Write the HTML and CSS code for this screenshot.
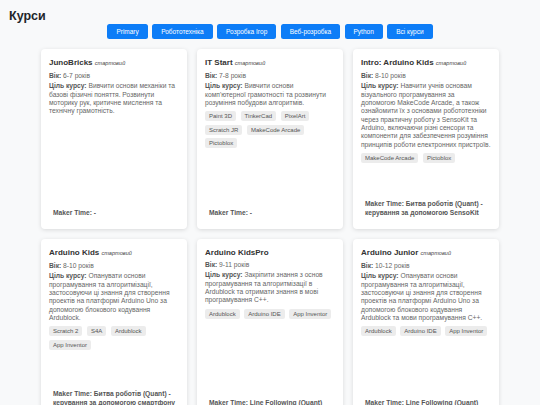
FILE: index.html
```html
<!DOCTYPE html>
<html lang="uk">
<head>
<meta charset="utf-8">
<title>Курси</title>
<link rel="stylesheet" href="styles.css">
</head>
<body>
<h1 class="page-title">Курси</h1>
<div class="filters">
  <button class="btn">Primary</button>
  <button class="btn">Робототехніка</button>
  <button class="btn">Розробка Ігор</button>
  <button class="btn">Веб-розробка</button>
  <button class="btn">Python</button>
  <button class="btn">Всі курси</button>
</div>
<div class="grid">
  <div class="card">
    <div class="card-title">JunoBricks <span class="badge">стартовий</span></div>
    <p class="line"><b>Вік:</b> 6-7 років</p>
    <p class="line goal"><b>Ціль курсу:</b> Вивчити основи механіки та базові фізичні поняття. Розвинути моторику рук, критичне мислення та технічну грамотність.</p>
    <div class="maker">Maker Time: -</div>
  </div>
  <div class="card">
    <div class="card-title">IT Start <span class="badge">стартовий</span></div>
    <p class="line"><b>Вік:</b> 7-8 років</p>
    <p class="line goal"><b>Ціль курсу:</b> Вивчити основи комп'ютерної грамотності та розвинути розуміння побудови алгоритмів.</p>
    <div class="tags">
      <span class="tag">Paint 3D</span><span class="tag">TinkerCad</span><span class="tag">PixelArt</span><span class="tag">Scratch JR</span><span class="tag">MakeCode Arcade</span><span class="tag">Pictoblox</span>
    </div>
    <div class="maker">Maker Time: -</div>
  </div>
  <div class="card">
    <div class="card-title">Intro: Arduino Kids <span class="badge">стартовий</span></div>
    <p class="line"><b>Вік:</b> 8-10 років</p>
    <p class="line goal"><b>Ціль курсу:</b> Навчити учнів основам візуального програмування за допомогою&nbsp;MakeCode Arcade, а також ознайомити їх з основами робототехніки через практичну роботу з SensoKit та Arduino, включаючи різні сенсори та компоненти для забезпечення розуміння принципів роботи електронних пристроїв.</p>
    <div class="tags">
      <span class="tag">MakeCode Arcade</span><span class="tag">Pictoblox</span>
    </div>
    <div class="maker">Maker Time: Битва роботів (Quant) - керування за допомогою SensoKit</div>
  </div>
  <div class="card">
    <div class="card-title">Arduino Kids <span class="badge">стартовий</span></div>
    <p class="line"><b>Вік:</b> 8-10 років</p>
    <p class="line goal"><b>Ціль курсу:</b> Опанувати основи програмування та алгоритмізації, застосовуючи ці знання для створення проектів на платформі Arduino Uno за допомогою блокового кодування Ardublock.</p>
    <div class="tags">
      <span class="tag">Scratch 2</span><span class="tag">S4A</span><span class="tag">Ardublock</span><span class="tag">App Inventor</span>
    </div>
    <div class="maker">Maker Time: Битва роботів (Quant) - керування за допомогою смартфону</div>
  </div>
  <div class="card">
    <div class="card-title">Arduino KidsPro</div>
    <p class="line"><b>Вік:</b> 9-11 років</p>
    <p class="line goal"><b>Ціль курсу:</b> Закріпити знання з основ програмування та алгоритмізації в Ardublock та отримати знання в мові програмування C++.</p>
    <div class="tags">
      <span class="tag">Ardublock</span><span class="tag">Arduino IDE</span><span class="tag">App Inventor</span>
    </div>
    <div class="maker">Maker Time: Line Following (Quant)</div>
  </div>
  <div class="card">
    <div class="card-title">Arduino Junior <span class="badge">стартовий</span></div>
    <p class="line"><b>Вік:</b> 10-12 років</p>
    <p class="line goal"><b>Ціль курсу:</b> Опанувати основи програмування та алгоритмізації, застосовуючи ці знання для створення проектів на платформі Arduino Uno за допомогою блокового кодування Ardublock та мови програмування C++.</p>
    <div class="tags">
      <span class="tag">Ardublock</span><span class="tag">Arduino IDE</span><span class="tag">App Inventor</span>
    </div>
    <div class="maker">Maker Time: Line Following (Quant)</div>
  </div>
</div>
</body>
</html>
```
FILE: styles.css
```css
html, body {
  margin: 0;
  padding: 0;
}
body {
  background: #f8f9fa;
  font-family: "Liberation Sans", Arial, sans-serif;
  color: #555;
}
.page-title {
  margin: 0;
  padding: 9px 9px 0;
  font-size: 12.5px;
  line-height: 15px;
  font-weight: bold;
  color: #212529;
}
.filters {
  display: flex;
  justify-content: center;
  gap: 4.4px;
}
.btn {
  height: 15px;
  padding: 0 9px;
  border: 0;
  border-radius: 2.5px;
  background: #0d7df7;
  color: #fff;
  font-family: inherit;
  font-size: 6.5px;
  line-height: 15px;
}
.grid {
  display: grid;
  grid-template-columns: repeat(3, 146px);
  grid-auto-rows: 180px;
  gap: 10px;
  justify-content: center;
  margin-top: 10px;
}
.card {
  background: #fff;
  border-radius: 4px;
  box-shadow: 0 1px 4px rgba(0, 0, 0, 0.13);
  padding: 8px;
  display: flex;
  flex-direction: column;
  box-sizing: border-box;
  overflow: hidden;
}
.card-title {
  font-size: 8px;
  line-height: 11px;
  font-weight: bold;
  color: #333;
  margin-bottom: 2.5px;
}
.badge {
  font-size: 5.6px;
  font-style: italic;
  font-weight: normal;
  color: #444;
}
.line {
  margin: 0 0 2.5px;
  font-size: 6.7px;
  line-height: 8.35px;
  color: #666;
}
.line b {
  color: #555;
}
.goal {
  margin-bottom: 4px;
}
.tags {
  display: flex;
  flex-wrap: wrap;
  gap: 3.3px 4.6px;
}
.tag {
  background: #ececec;
  border-radius: 2px;
  padding: 0 4px;
  height: 10px;
  font-size: 6px;
  line-height: 10px;
  color: #555;
}
.maker {
  margin-top: auto;
  padding: 0 4px 4px;
  font-size: 6.7px;
  line-height: 9px;
  font-weight: bold;
  color: #555;
}
```
